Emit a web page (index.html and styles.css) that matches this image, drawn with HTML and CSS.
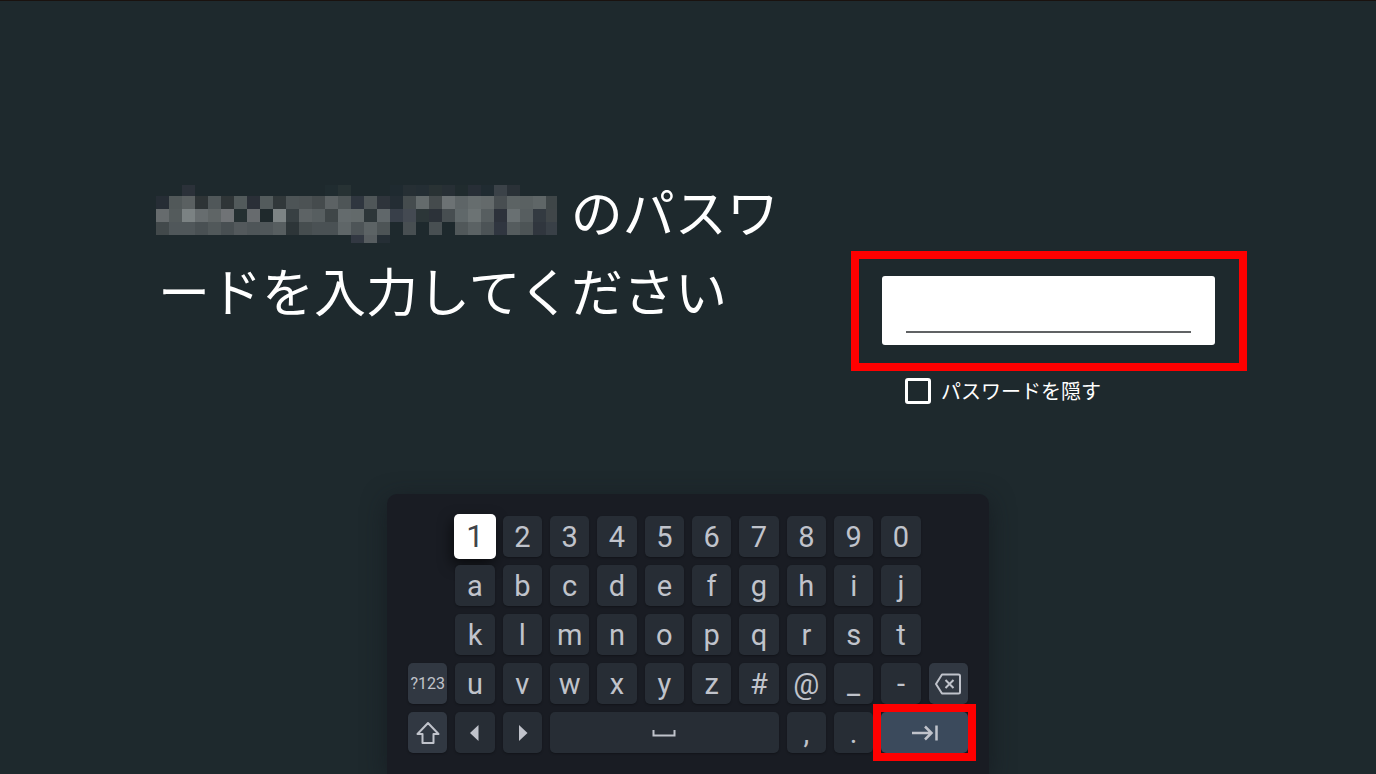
FILE: index.html
```html
<!DOCTYPE html>
<html lang="ja">
<head>
<meta charset="utf-8">
<meta name="viewport" content="width=device-width, initial-scale=1">
<title>パスワードの入力</title>
<link rel="stylesheet" href="styles.css">
</head>
<body>
<main class="screen">
  <form class="signin" onsubmit="return false">
    <h1 class="prompt"><svg class="mosaic" id="mosaic" viewBox="0 0 401 58" aria-hidden="true"></svg> のパスワードを入力してください</h1>
    <div class="entry">
      <div class="highlight">
        <div class="field"><input class="field-input" type="text" aria-label="パスワード"></div>
      </div>
      <label class="hide"><input class="hide-box" type="checkbox"><span>パスワードを隠す</span></label>
    </div>
  </form>

  <section class="keyboard" aria-label="キーボード">
    <button class="key col-2 focused" type="button">1</button>
    <button class="key" type="button">2</button>
    <button class="key" type="button">3</button>
    <button class="key" type="button">4</button>
    <button class="key" type="button">5</button>
    <button class="key" type="button">6</button>
    <button class="key" type="button">7</button>
    <button class="key" type="button">8</button>
    <button class="key" type="button">9</button>
    <button class="key" type="button">0</button>

    <button class="key col-2" type="button">a</button>
    <button class="key" type="button">b</button>
    <button class="key" type="button">c</button>
    <button class="key" type="button">d</button>
    <button class="key" type="button">e</button>
    <button class="key" type="button">f</button>
    <button class="key" type="button">g</button>
    <button class="key" type="button">h</button>
    <button class="key" type="button">i</button>
    <button class="key" type="button">j</button>

    <button class="key col-2" type="button">k</button>
    <button class="key" type="button">l</button>
    <button class="key" type="button">m</button>
    <button class="key" type="button">n</button>
    <button class="key" type="button">o</button>
    <button class="key" type="button">p</button>
    <button class="key" type="button">q</button>
    <button class="key" type="button">r</button>
    <button class="key" type="button">s</button>
    <button class="key" type="button">t</button>

    <button class="key side col-1" type="button">?123</button>
    <button class="key" type="button">u</button>
    <button class="key" type="button">v</button>
    <button class="key" type="button">w</button>
    <button class="key" type="button">x</button>
    <button class="key" type="button">y</button>
    <button class="key" type="button">z</button>
    <button class="key" type="button">#</button>
    <button class="key" type="button">@</button>
    <button class="key" type="button">_</button>
    <button class="key" type="button">-</button>
    <button class="key side" type="button" aria-label="削除">
      <svg class="icon" viewBox="0 0 28 24" fill="none" stroke="currentColor" stroke-width="2" stroke-linejoin="round"><path d="M8 2.500H24.500Q26 2.500 26 4V20Q26 21.500 24.500 21.500H8L2 12Z"/><path d="M11.500 8L19.500 16M19.500 8L11.500 16"/></svg>
    </button>

    <button class="key side col-1" type="button" aria-label="シフト">
      <svg class="icon" viewBox="0 0 28 24" fill="none" stroke="currentColor" stroke-width="2" stroke-linejoin="round"><path d="M14 2L24.500 13H19.500V22H8.500V13H3.500Z"/></svg>
    </button>
    <button class="key" type="button" aria-label="左へ">
      <svg class="icon" viewBox="0 0 28 24" fill="currentColor"><path d="M17.500 4V20L9 12Z"/></svg>
    </button>
    <button class="key" type="button" aria-label="右へ">
      <svg class="icon" viewBox="0 0 28 24" fill="currentColor"><path d="M11 4V20L19.500 12Z"/></svg>
    </button>
    <button class="key space" type="button" aria-label="スペース">
      <svg class="icon" viewBox="0 0 28 24" fill="none" stroke="currentColor" stroke-width="2"><path d="M3.500 9V14.500H24.500V9"/></svg>
    </button>
    <button class="key" type="button">,</button>
    <button class="key" type="button">.</button>
    <button class="key next" type="button" aria-label="次へ">
      <svg class="icon" viewBox="0 0 28 24" fill="none" stroke="currentColor" stroke-width="2.500"><path d="M1 12H20.500M14 5.500L20.500 12L14 18.500M25.500 4.500V19.500"/></svg>
    </button>
  </section>
</main>
<script src="mosaic.js"></script>
</body>
</html>
```

FILE: styles.css
```css
* {
  box-sizing: border-box;
}

body {
  margin: 0;
  background: #1e292d;
  color: #fff;
  font-family: Roboto, "Noto Sans CJK JP", sans-serif;
}

.screen {
  display: flex;
  flex-direction: column;
  justify-content: space-between;
  align-items: center;
  min-height: 100vh;
  overflow: hidden;
  border-top: 1px solid #1a120f;
}

.signin {
  display: flex;
  align-items: flex-start;
  justify-content: space-between;
  width: 100%;
  padding: 170px 129px 0 158px;
}

.prompt {
  flex: 0 1 636px;
  margin: 0;
  font-family: "Noto Sans CJK JP", sans-serif;
  font-size: 52px;
  font-weight: 400;
  line-height: 79px;
}

.mosaic {
  width: 401px;
  height: 58px;
  margin: 0 2px 0 -2px;
  vertical-align: -10px;
}

.entry {
  flex: 0 0 396px;
  margin-top: 80px;
}

.highlight {
  padding: 17px 24px 18px 23px;
  border: 8px solid #f00;
}

.field {
  height: 69px;
  padding: 16px 24px 12px;
  border-radius: 3px;
  background: #fff;
}

.field-input {
  display: block;
  width: 100%;
  height: 41px;
  padding: 0;
  border: 0;
  border-bottom: 2px solid #606264;
  border-radius: 0;
  outline: 0;
  background: transparent;
  color: #222;
  font-size: 24px;
}

.hide {
  display: flex;
  align-items: center;
  gap: 10px;
  margin: 5px 0 0 54px;
  font-family: "Noto Sans CJK JP", sans-serif;
  font-size: 20px;
  line-height: 30px;
}

.hide-box {
  appearance: none;
  width: 26px;
  height: 26px;
  margin: 0;
  border: 3px solid #fff;
  border-radius: 3px;
}

.keyboard {
  display: grid;
  grid-template-columns: repeat(12, 1fr);
  grid-auto-rows: 41px;
  gap: 8px;
  width: 602px;
  max-width: 100%;
  padding: 22px 21px 21px;
  border-radius: 10px 10px 0 0;
  background: #191c23;
  box-shadow: 0 6px 24px rgba(20, 24, 30, 0.7);
}

.key {
  display: flex;
  align-items: center;
  justify-content: center;
  min-width: 0;
  padding: 1px 0 0;
  border: 0;
  border-radius: 5px;
  background: #272d35;
  box-shadow: 0 1px 2px rgba(0, 0, 0, 0.3);
  color: #c0c3cb;
  font-family: Roboto, sans-serif;
  font-size: 29px;
  line-height: 40px;
}

.col-1 {
  grid-column-start: 1;
}

.col-2 {
  grid-column-start: 2;
}

.focused {
  margin: -2px -1px;
  background: #fff;
  box-shadow: -2px 6px 14px rgba(0, 0, 0, 0.6);
  color: #40444a;
  font-size: 31px;
}

.side {
  background: #313842;
  font-size: 16px;
}

.space {
  grid-column: span 5;
}

.next {
  position: relative;
  grid-column: span 2;
  background: #3b4a5c;
}

.next::after {
  content: "";
  position: absolute;
  inset: -8px;
  border: 8px solid #f00;
}

.icon {
  width: 28px;
  height: 24px;
}
```

FILE: mosaic.js
```js
// Pixelated cover for the account name: one colour per 13px cell, "-" for an empty cell.
const rows = [
  { y: 0, h: 11, cells: "- - 2b3139 - - - - - - - - - - 202c30 273234 - - - 1f2a30 262f34 242e34 293234 272f35 202b2e 272e36 202b31 3b4248 2a3137 - - -" },
  { y: 11, h: 13, cells: "262d35 515859 5a6061 2e3436 505759 2f3537 525a5b 2a2f37 535b5c 31383a 4d5456 4c5254 454b4d 5c6264 4e5557 2f363f 4f5658 2e343b 242d34 454c4e 646b6c 454b4d 6c7274 5e6567 666d6e 646a6b 484e51 5c6364 5a6162 5f6667 3f4648" },
  { y: 24, h: 13, cells: "666b6d 545b5c 7b8283 676d6f 5f6566 707376 253032 676b6e 1f292c 7d8485 384043 5d6365 575e60 3f4648 646b6d 636a6b 2d3639 60676a 383f49 444a52 2c3638 2c3239 474e51 60686a 6c7374 575e60 2d323b 697072 575e60 333a41 404649" },
  { y: 37, h: 13, cells: "42494b 50575a 50575a 495053 51585a 484f52 53595c 4e5558 50575a 575e60 2d3538 464d4f 4a5154 4a5154 5f6668 4d5457 5c6365 4d5456 - 484f52 - 484f52 - 51585a 5b6264 4c5356 303640 555c5e 4d5456 30363e 394047" },
  { y: 50, h: 8, cells: "- - - - - - - - - - - - - - - 323842 575d60 252e35" }
];

const mosaic = document.getElementById("mosaic");
for (const row of rows) {
  row.cells.split(" ").forEach((color, i) => {
    if (color === "-") return;
    const rect = document.createElementNS("http://www.w3.org/2000/svg", "rect");
    rect.setAttribute("x", i * 13);
    rect.setAttribute("y", row.y);
    rect.setAttribute("width", 13);
    rect.setAttribute("height", row.h);
    rect.setAttribute("fill", "#" + color);
    mosaic.appendChild(rect);
  });
}
```
